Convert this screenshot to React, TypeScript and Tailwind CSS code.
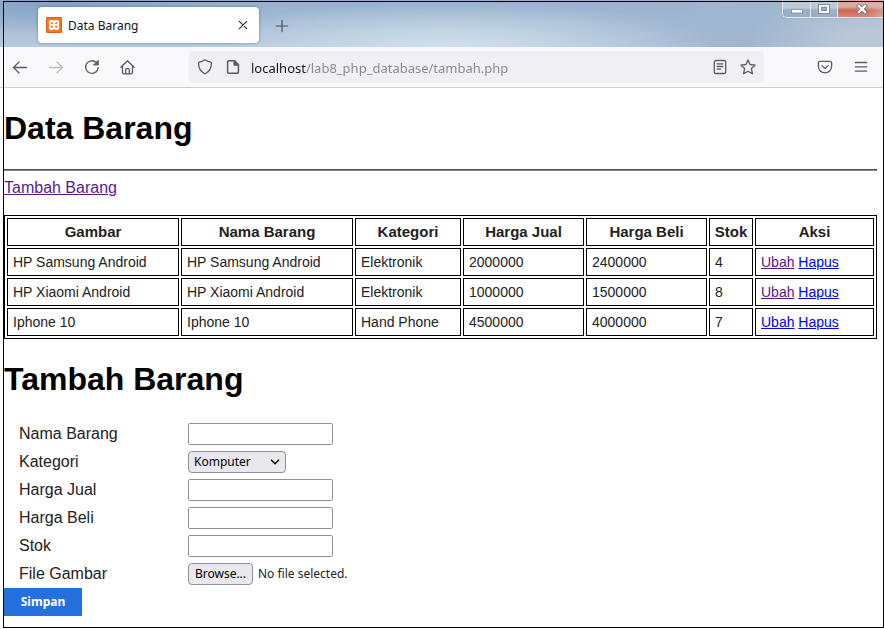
import type { ReactNode } from "react";

type Item = {
  nama: string;
  kategori: string;
  jual: string;
  beli: string;
  stok: string;
  visited: boolean;
};

const items: Item[] = [
  { nama: "HP Samsung Android", kategori: "Elektronik", jual: "2000000", beli: "2400000", stok: "4", visited: true },
  { nama: "HP Xiaomi Android", kategori: "Elektronik", jual: "1000000", beli: "1500000", stok: "8", visited: true },
  { nama: "Iphone 10", kategori: "Hand Phone", jual: "4500000", beli: "4000000", stok: "7", visited: false },
];

const headers = ["Gambar", "Nama Barang", "Kategori", "Harga Jual", "Harga Beli", "Stok", "Aksi"];

const uiFont = "font-['Noto_Sans','Open_Sans',sans-serif]";

function Glyph({ children, width = "1.3" }: { children: ReactNode; width?: string }) {
  return (
    <svg
      viewBox="0 0 16 16"
      className="size-4 shrink-0"
      fill="none"
      stroke="currentColor"
      strokeWidth={width}
      strokeLinecap="round"
      strokeLinejoin="round"
      aria-hidden="true"
    >
      {children}
    </svg>
  );
}

function ToolButton({ label, children, faded = false }: { label: string; children: ReactNode; faded?: boolean }) {
  return (
    <button
      type="button"
      aria-label={label}
      disabled={faded}
      className={faded ? "p-2 text-[#bdbdc2]" : "p-2 text-[#5b5b66]"}
    >
      {children}
    </button>
  );
}

function TitleBar() {
  return (
    <div className="flex h-[47px] items-start bg-[radial-gradient(ellipse_170px_34px_at_6%_0%,#86a2c9_0%,transparent_100%),radial-gradient(ellipse_260px_46px_at_51%_100%,#cfdeea_0%,transparent_100%),radial-gradient(ellipse_140px_60px_at_100%_100%,#b9c7d8_30%,transparent_100%),linear-gradient(to_right,transparent_50%,#9fb5d0_85%),linear-gradient(to_bottom,#93aecd,#b7cbdf)] pl-[38px]">
      <div className="mt-[7px] flex h-9 w-[221px] items-center rounded-[4px] bg-white pr-2 pl-2 shadow-[0_0_3px_rgba(40,60,90,0.5)]">
        <svg viewBox="0 0 16 16" className="size-4 shrink-0" aria-hidden="true">
          <rect width="16" height="16" rx="1.2" fill="#f07826" />
          <rect x="0.5" y="0.5" width="15" height="15" rx="0.8" fill="none" stroke="#d9631a" />
          <path
            d="M8 6.6C7.8 4.8 6.8 4 5.6 4C4.3 4 3.7 4.9 3.7 6C3.7 7 4.3 7.6 5 8C4.3 8.4 3.7 9 3.7 10C3.7 11.1 4.3 12 5.6 12C6.8 12 7.8 11.2 8 9.4C8.2 11.2 9.2 12 10.4 12C11.7 12 12.3 11.1 12.3 10C12.3 9 11.7 8.4 11 8C11.7 7.6 12.3 7 12.3 6C12.3 4.9 11.7 4 10.4 4C9.2 4 8.2 4.8 8 6.6Z"
            fill="none"
            stroke="#fff"
            strokeWidth="2"
            strokeLinejoin="round"
          />
          <path d="M5.6 8h4.8" stroke="#fff" strokeWidth="1.8" />
        </svg>
        <span className={`${uiFont} ml-1.5 flex-1 pt-0.5 text-[12px] leading-4 text-[#15141a]`}>Data Barang</span>
        <button type="button" aria-label="Close tab" className="text-[#333]">
          <Glyph width="1.2">
            <path d="M4.3 4.3l7.4 7.4M11.7 4.3l-7.4 7.4" />
          </Glyph>
        </button>
      </div>
      <button type="button" aria-label="New tab" className="mt-[18px] ml-[15px] text-[#4a5058]">
        <Glyph width="1.2">
          <path d="M8 2.3v11.4M2.3 8h11.4" />
        </Glyph>
      </button>
      <div className="mr-px ml-auto flex h-[18px] w-[101px] overflow-hidden rounded-bl-[5px] border-b border-l border-[#e4ebf2] shadow-[0_0_1px_#5f7590]">
        <button
          type="button"
          aria-label="Minimize"
          className="flex w-7 items-center justify-center border-r border-[#dfe7ef] bg-linear-to-b from-[#bccad9] from-45% to-[#9aafc6] to-60%"
        >
          <svg viewBox="0 0 12 6" className="mt-1 h-1.5 w-3" aria-hidden="true">
            <rect x="0.5" y="1.5" width="11" height="3.5" fill="#fff" stroke="#7d8a99" strokeWidth="0.8" />
          </svg>
        </button>
        <button
          type="button"
          aria-label="Maximize"
          className="flex w-[27px] items-center justify-center border-r border-[#dfe7ef] bg-linear-to-b from-[#bccad9] from-45% to-[#9aafc6] to-60%"
        >
          <svg viewBox="0 0 12 10" className="h-2.5 w-3" aria-hidden="true">
            <rect x="0.5" y="0.5" width="11" height="9" fill="#fff" stroke="#6d7a89" strokeWidth="0.8" />
            <rect x="3.7" y="3.2" width="4.6" height="3.4" fill="#9fb2c8" stroke="#6d7a89" strokeWidth="0.9" />
          </svg>
        </button>
        <button
          type="button"
          aria-label="Close"
          className="flex flex-1 items-center justify-center bg-[linear-gradient(to_right,transparent_60%,rgba(225,190,185,0.5)),linear-gradient(to_bottom,#dbaaa2_40%,#cc6857_60%,#d88576)]"
        >
          <svg viewBox="0 0 12 10" className="ml-0.5 h-2.5 w-3" strokeLinecap="square" aria-hidden="true">
            <path d="M3 2l6 6M9 2l-6 6" stroke="#6b6f7c" strokeWidth="3.9" />
            <path d="M3 2l6 6M9 2l-6 6" stroke="#fff" strokeWidth="2.4" />
          </svg>
        </button>
      </div>
    </div>
  );
}

function Toolbar() {
  return (
    <div className="flex h-[41px] items-center border-b border-[#cccccf] bg-[#f9f9fb] pr-[7px] pl-1">
      <nav aria-label="Navigation" className="flex gap-1">
        <ToolButton label="Back">
          <Glyph>
            <path d="M14.5 8.5H1.5M7 3L1.5 8.5L7 14" />
          </Glyph>
        </ToolButton>
        <ToolButton label="Forward" faded>
          <Glyph>
            <path d="M1.5 8.5h13M9 3L14.5 8.5L9 14" />
          </Glyph>
        </ToolButton>
        <ToolButton label="Reload">
          <Glyph>
            <path d="M14.2 8.7A6.3 6.3 0 1 1 12.4 3.6" />
            <path d="M14.3 1.4V6H9.7Z" fill="currentColor" strokeWidth="0.8" />
          </Glyph>
        </ToolButton>
        <ToolButton label="Home">
          <Glyph>
            <path d="M0.9 8.2L7.5 1.7l6.6 6.5M2.5 6.9V13.4a1.4 1.4 0 0 0 1.4 1.4h7.2A1.4 1.4 0 0 0 12.5 13.4V6.9M5.7 14.6V10.6a1 1 0 0 1 1-1h1.6a1 1 0 0 1 1 1v4" />
          </Glyph>
        </ToolButton>
      </nav>

      <div className="ml-[45px] flex h-8 flex-1 items-center rounded-[4px] bg-[#f0f0f4] px-2 text-[#5b5b66]">
        <Glyph>
          <path d="M8 .8C10 2.2 12 3 14.4 3.3C14.7 8.4 12.8 12.6 8 15C3.2 12.6 1.3 8.4 1.6 3.3C4 3 6 2.2 8 .8Z" />
        </Glyph>
        <span className="ml-3">
          <Glyph width="1.5">
            <path d="M9.5 1.7H4A1.4 1.4 0 0 0 2.6 3.1v9.8A1.4 1.4 0 0 0 4 14.3h8a1.4 1.4 0 0 0 1.4-1.4V5.6Z" />
            <path d="M9.2 1.7V6h4.2Z" fill="currentColor" />
          </Glyph>
        </span>
        <input
          type="text"
          aria-label="Address"
          defaultValue="localhost/lab8_php_database/tambah.php"
          className={`${uiFont} ml-2.5 h-6 min-w-0 flex-1 bg-[linear-gradient(to_right,#15141a_55px,#86868c_55px)] bg-clip-text pt-0.5 text-[13px] text-transparent caret-black outline-none`}
        />
        <button type="button" aria-label="Reader view">
          <Glyph>
            <rect x="2.3" y="1.5" width="11.4" height="13" rx="1.4" />
            <path d="M5.2 4.8h5.6M5.2 7.5h5.6M5.2 10.2h3.3" />
          </Glyph>
        </button>
        <button type="button" aria-label="Bookmark" className="ml-3">
          <Glyph>
            <path d="M8 .9l2 4.6 5.2.6-3.8 3.5 1 5.2L8 12.3l-4.4 2.5 1-5.2L.8 6.1 6 5.5Z" />
          </Glyph>
        </button>
      </div>

      <div className="ml-[45px] flex gap-1">
        <ToolButton label="Save to Pocket">
          <Glyph>
            <path d="M2.7 2.4h10.6a1.3 1.3 0 0 1 1.3 1.3v3.6a6.6 6.6 0 0 1-13.2 0V3.7a1.3 1.3 0 0 1 1.3-1.3Z" />
            <path d="M4.8 6.6L8 9.6l3.2-3" />
          </Glyph>
        </ToolButton>
        <ToolButton label="Menu">
          <Glyph>
            <path d="M2.3 3.5h11.4M2.3 7.8h11.4M2.3 12.1h11.4" />
          </Glyph>
        </ToolButton>
      </div>
    </div>
  );
}

function ItemTable() {
  return (
    <table className="mt-[15px] w-full table-fixed border-separate border-spacing-[2px] border border-black text-[14px] leading-4 text-[#222]">
      <colgroup>
        <col className="w-[172px]" />
        <col className="w-[172px]" />
        <col className="w-[106px]" />
        <col className="w-[121px]" />
        <col className="w-[121px]" />
        <col className="w-[44px]" />
        <col />
      </colgroup>
      <thead>
        <tr>
          {headers.map((h) => (
            <th key={h} className="h-7 border border-black text-center text-[15px] font-bold">
              {h}
            </th>
          ))}
        </tr>
      </thead>
      <tbody>
        {items.map((item) => (
          <tr key={item.nama}>
            {[item.nama, item.nama, item.kategori, item.jual, item.beli, item.stok].map((value, i) => (
              <td key={i} className="h-7 border border-black px-[5px]">
                {value}
              </td>
            ))}
            <td className="h-7 border border-black px-[5px]">
              <a href="#ubah" className={item.visited ? "text-[#551a8b] underline" : "text-[#0000ee] underline"}>
                Ubah
              </a>{" "}
              <a href="#hapus" className="text-[#0000ee] underline">
                Hapus
              </a>
            </td>
          </tr>
        ))}
      </tbody>
    </table>
  );
}

function Row({ id, label, children }: { id: string; label: string; children: ReactNode }) {
  return (
    <div className="flex h-7 items-center">
      <label htmlFor={id} className="w-[184px] pl-[15px] text-[16px] leading-6 text-[#222]">
        {label}
      </label>
      {children}
    </div>
  );
}

function TextField({ id, label }: { id: string; label: string }) {
  return (
    <Row id={id} label={label}>
      <input
        id={id}
        type="text"
        className={`${uiFont} h-[22px] w-[145px] rounded-[2px] border border-[#8f8f9d] bg-white px-1 text-[12px]`}
      />
    </Row>
  );
}

function ItemForm() {
  return (
    <form onSubmit={(e) => e.preventDefault()}>
      <TextField id="nama" label="Nama Barang" />
      <Row id="kategori" label="Kategori">
        <span className="relative">
          <select
            id="kategori"
            className={`${uiFont} block h-[22px] w-[98px] appearance-none rounded-[4px] border border-[#8f8f9d] bg-[#e9e9ed] pl-[5px] text-[12px] leading-4 text-black`}
          >
            <option>Komputer</option>
            <option>Elektronik</option>
            <option>Hand Phone</option>
          </select>
          <svg
            viewBox="0 0 10 6"
            className="pointer-events-none absolute top-2 right-1.5 h-1.5 w-2.5"
            fill="none"
            stroke="#000"
            strokeWidth="1.5"
            aria-hidden="true"
          >
            <path d="M1 .8l4 4 4-4" />
          </svg>
        </span>
      </Row>
      <TextField id="jual" label="Harga Jual" />
      <TextField id="beli" label="Harga Beli" />
      <TextField id="stok" label="Stok" />
      <Row id="gambar" label="File Gambar">
        <input id="gambar" type="file" className="sr-only" />
        <label htmlFor="gambar" className={`${uiFont} flex items-center text-[12px] leading-4`}>
          <span className="flex h-[22px] w-[65px] items-center justify-center rounded-[4px] border border-[#8f8f9d] bg-[#e9e9ed] text-black">
            Browse...
          </span>
          <span className="ml-[5px] text-[#222]">No file selected.</span>
        </label>
      </Row>
      <button
        type="submit"
        className={`${uiFont} block h-7 w-[78px] bg-[#2570df] text-[12px] leading-4 font-bold text-white`}
      >
        Simpan
      </button>
    </form>
  );
}

export default function App() {
  return (
    <div className="relative bg-white pb-[13px] font-['Liberation_Sans',Arial,sans-serif]">
      <TitleBar />
      <Toolbar />
      <main className="pr-[7px] pl-1">
        <h1 className="pt-[22px] text-[32px] leading-9 font-bold text-black">Data Barang</h1>
        <hr className="mt-[23px] h-0.5 border-t border-b border-t-[#555] border-b-[#808080]" />
        <a href="#tambah" className="mt-[5px] inline-block text-[16px] leading-6 text-[#551a8b] underline">
          Tambah Barang
        </a>
        <ItemTable />
        <h1 id="tambah" className="mt-[22px] mb-[23px] text-[32px] leading-9 font-bold text-black">
          Tambah Barang
        </h1>
        <ItemForm />
      </main>
      <div className="pointer-events-none absolute top-px right-0 bottom-px left-[3px] border border-black" />
    </div>
  );
}
